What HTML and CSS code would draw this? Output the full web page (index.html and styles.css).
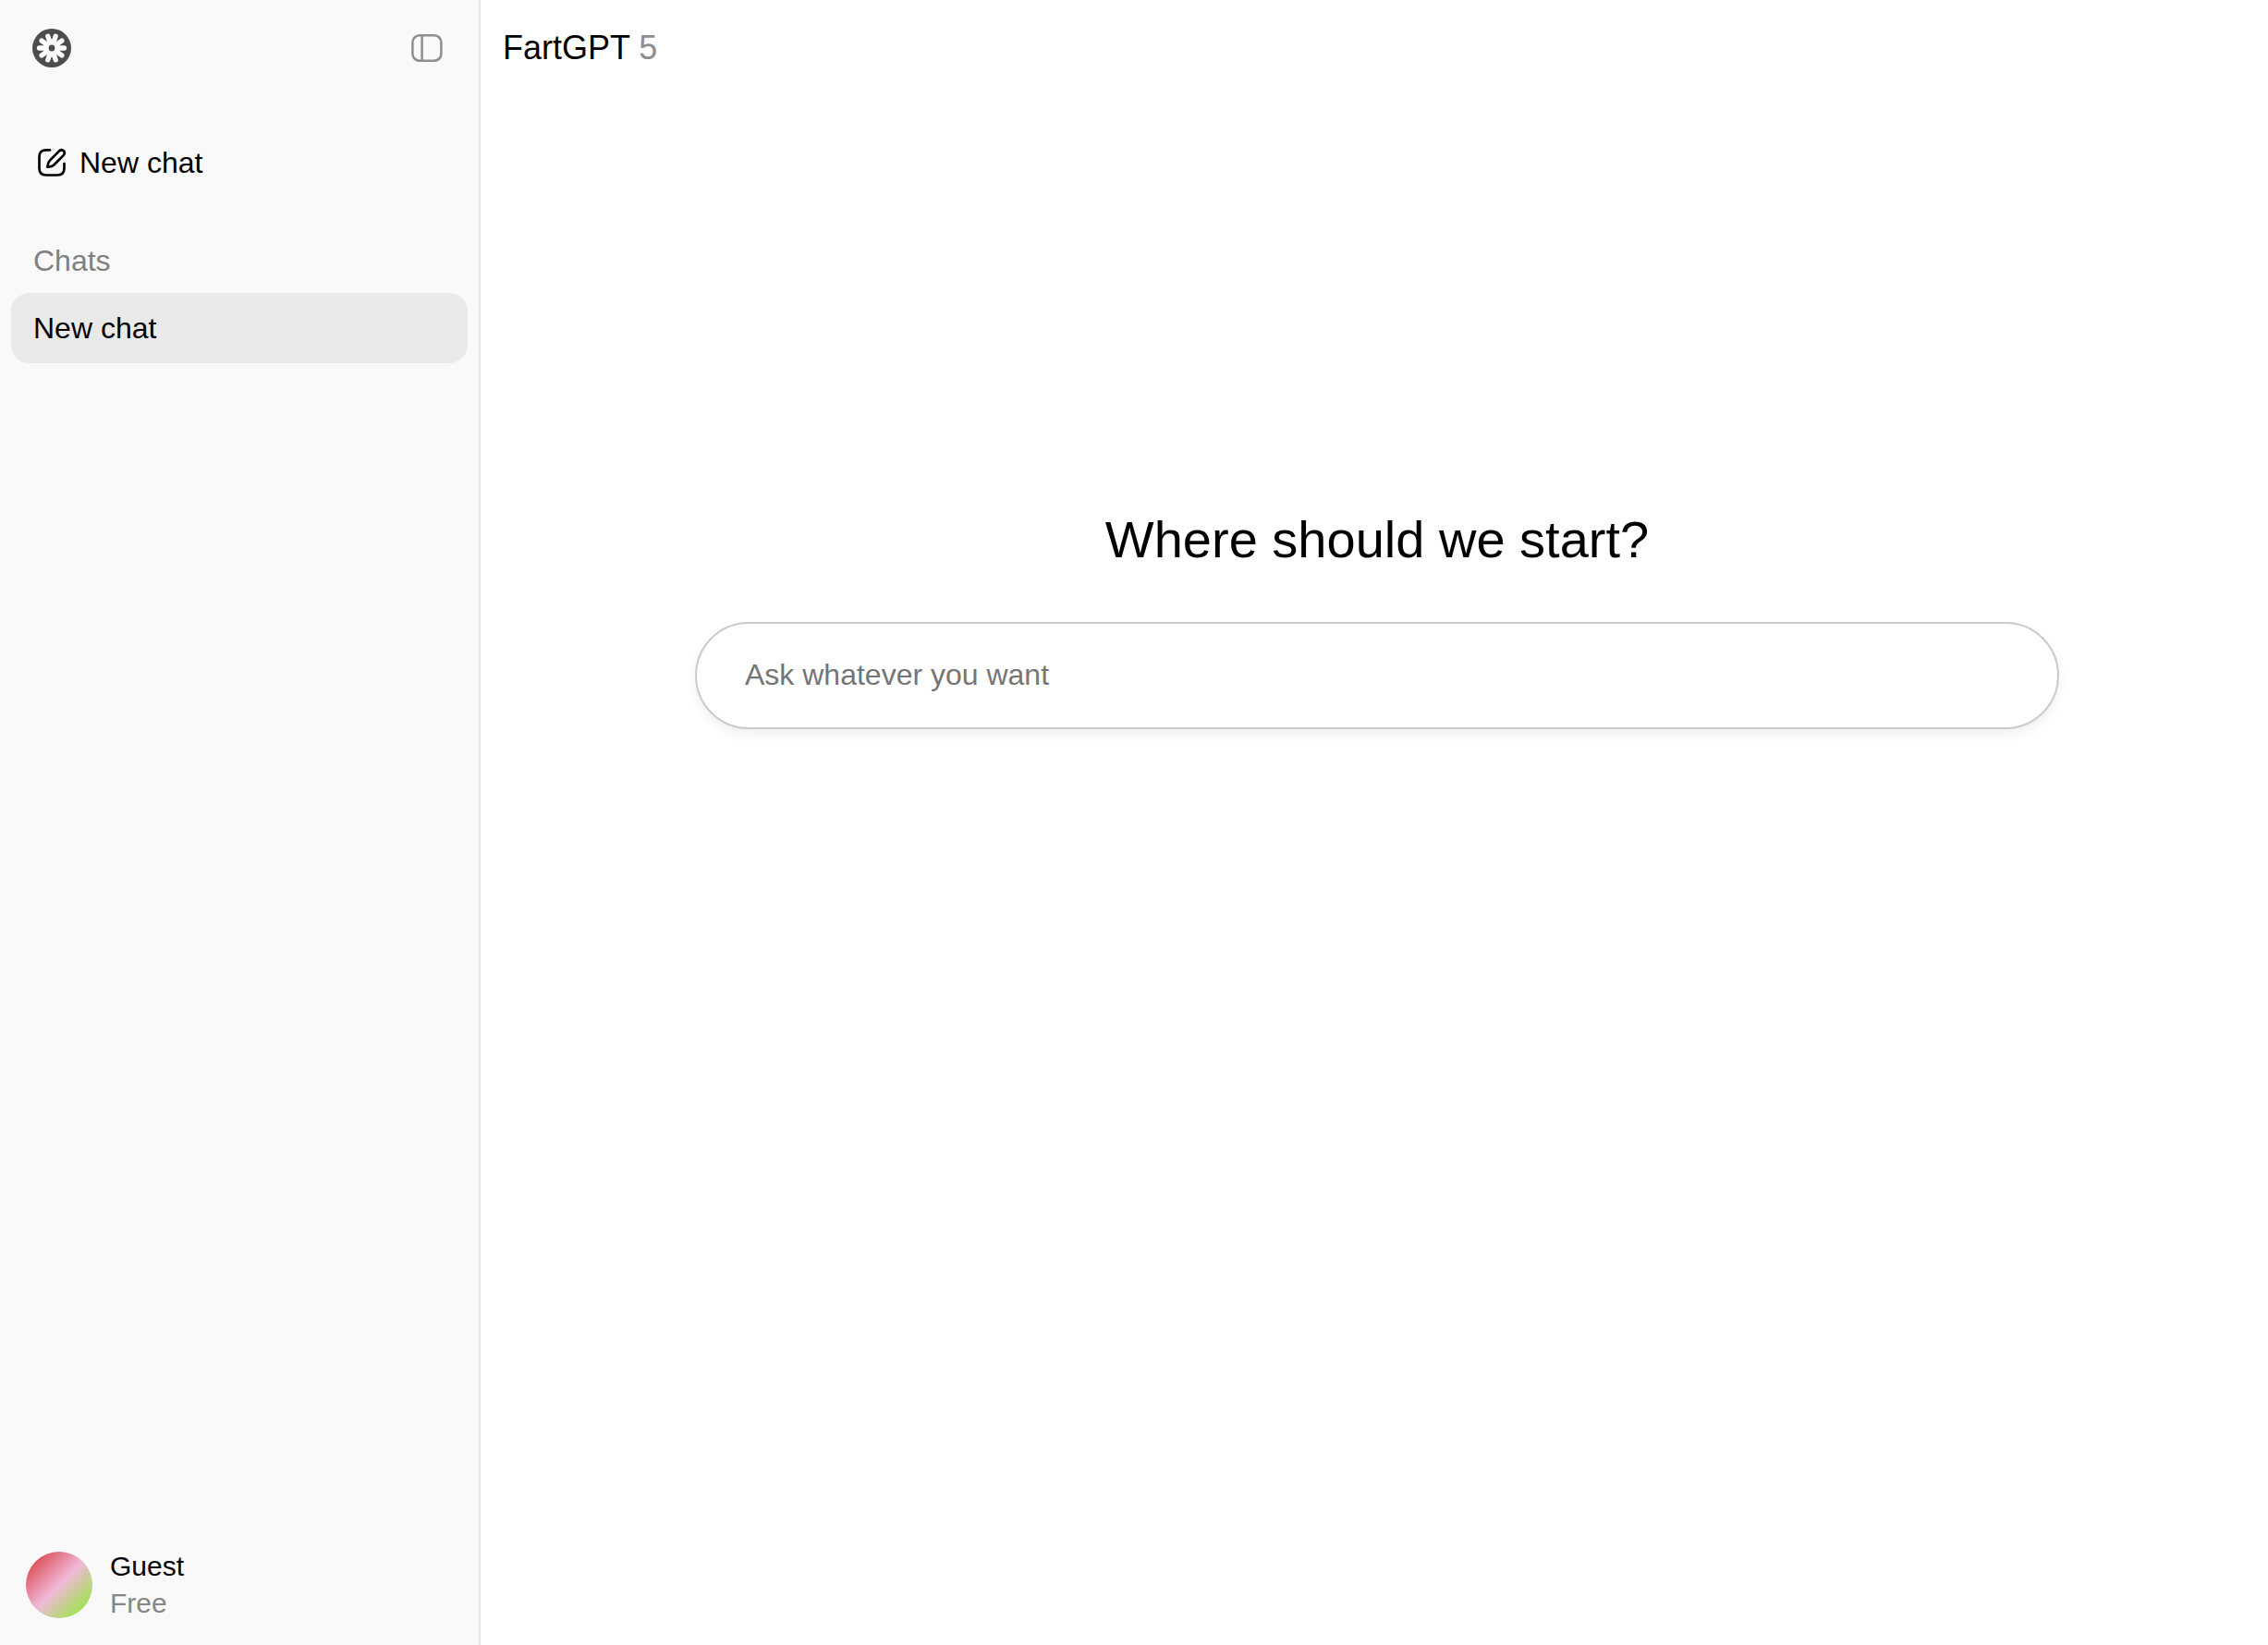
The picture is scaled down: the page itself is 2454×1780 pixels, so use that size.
FILE: index.html
```html
<!DOCTYPE html>
<html lang="en">
<head>
<meta charset="utf-8">
<meta name="viewport" content="width=device-width, initial-scale=1">
<title>FartGPT</title>
<link rel="stylesheet" href="styles.css">
</head>
<body>
<div class="app">
  <aside class="sidebar">
    <div class="sidebar-top">
      <a class="logo" href="#" aria-label="Home">
        <svg width="42" height="42" viewBox="-21 -21 42 42">
          <circle r="21" fill="#4d4d4d"/>
          <g stroke="#fff" stroke-width="5.4" stroke-linecap="round">
            <path d="M-13.4 0H13.4"/>
            <path d="M-13.4 0H13.4" transform="rotate(36)"/>
            <path d="M-13.4 0H13.4" transform="rotate(72)"/>
            <path d="M-13.4 0H13.4" transform="rotate(108)"/>
            <path d="M-13.4 0H13.4" transform="rotate(144)"/>
          </g>
          <circle r="3.4" fill="#4d4d4d"/>
        </svg>
      </a>
      <button class="toggle" type="button" aria-label="Toggle sidebar">
        <svg width="34" height="30" viewBox="0 0 34 30" fill="none" stroke="#8e8e8e" stroke-width="2.5">
          <rect x="1.4" y="1.3" width="31" height="27.4" rx="7.5"/>
          <path d="M11.6 1.3V28.7"/>
        </svg>
      </button>
    </div>
    <button class="new-chat" type="button">
      <svg width="32" height="32" viewBox="0 0 32 32" fill="none" stroke="#000" stroke-width="2.7" stroke-linecap="round" stroke-linejoin="round">
        <path d="M14 2.4H10Q2.5 2.4 2.5 9.8V22Q2.5 29.5 10 29.5H22Q29.5 29.5 29.5 22V17"/>
        <path d="M11.4 20.6L11.8 18.2Q12.2 15.4 14.2 13.4L23.8 3.6C27.4 0.2 32 4.6 28.4 8.4L18.6 18.2Q16.6 20 13.8 20.4Z"/>
      </svg>
      New chat
    </button>
    <h2 class="section-title">Chats</h2>
    <nav class="chats" aria-label="Chats">
      <a class="chat active" href="#">New chat</a>
    </nav>
    <div class="account">
      <span class="avatar"></span>
      <div>
        <div>Guest</div>
        <div class="plan">Free</div>
      </div>
    </div>
  </aside>
  <main class="main">
    <header class="topbar">FartGPT <span class="version">5</span></header>
    <section class="start">
      <h1 class="greeting">Where should we start?</h1>
      <input class="prompt" type="text" placeholder="Ask whatever you want" aria-label="Message">
    </section>
  </main>
</div>
</body>
</html>
```
FILE: styles.css
```css
* { box-sizing: border-box; }

body {
  margin: 0;
  font: 32px/40px "Liberation Sans", Arial, sans-serif;
  color: #000;
  background: #fff;
}

button, input { font: inherit; color: inherit; }
button { padding: 0; border: 0; background: none; cursor: pointer; }
a { color: inherit; text-decoration: none; }
svg { display: block; }

.app { display: flex; min-height: 100vh; }

.sidebar {
  flex: 0 0 520px;
  display: flex;
  flex-direction: column;
  padding: 0 12px 25px;
  background: #f9f9f9;
  border-right: 2px solid #e3e3e3;
}

.sidebar-top {
  display: flex;
  align-items: center;
  justify-content: space-between;
  height: 104px;
  padding: 0 27px 0 23px;
}

.new-chat {
  display: flex;
  align-items: center;
  gap: 14px;
  height: 76px;
  margin-top: 34px;
  padding: 0 28px;
}

.section-title {
  margin: 48px 24px 15px;
  font-size: 32px;
  font-weight: 400;
  color: #808080;
}

.chats { display: flex; flex-direction: column; }

.chat { padding: 18px 24px; border-radius: 20px; }
.active { background: #e9e9e9; }

.account {
  display: flex;
  align-items: center;
  gap: 19px;
  margin-top: auto;
  padding: 0 16px;
  font-size: 30px;
}

.avatar {
  width: 72px;
  height: 72px;
  border-radius: 50%;
  background: linear-gradient(135deg, #d63030, #efb8d8 50%, #84f420);
}

.plan { color: #868686; }

.main { flex: 1; min-width: 0; }

.topbar {
  height: 104px;
  padding: 32px 24px;
  font-size: 36px;
}

.version { color: #8e8e8e; }

.start {
  display: flex;
  flex-direction: column;
  align-items: center;
  gap: 54px;
  margin-top: 25vh;
  padding: 0 24px 24px 30px;
}

.greeting {
  margin: 0;
  font-size: 56px;
  line-height: 70px;
  font-weight: 400;
}

.prompt {
  width: 100%;
  max-width: 1476px;
  height: 116px;
  padding: 0 52px 2px;
  border: 2px solid #cacaca;
  border-radius: 58px;
  background: #fff;
  box-shadow: 0 6px 12px rgba(0, 0, 0, 0.06);
  outline: none;
}

.prompt::placeholder { color: #757575; opacity: 1; }
```
